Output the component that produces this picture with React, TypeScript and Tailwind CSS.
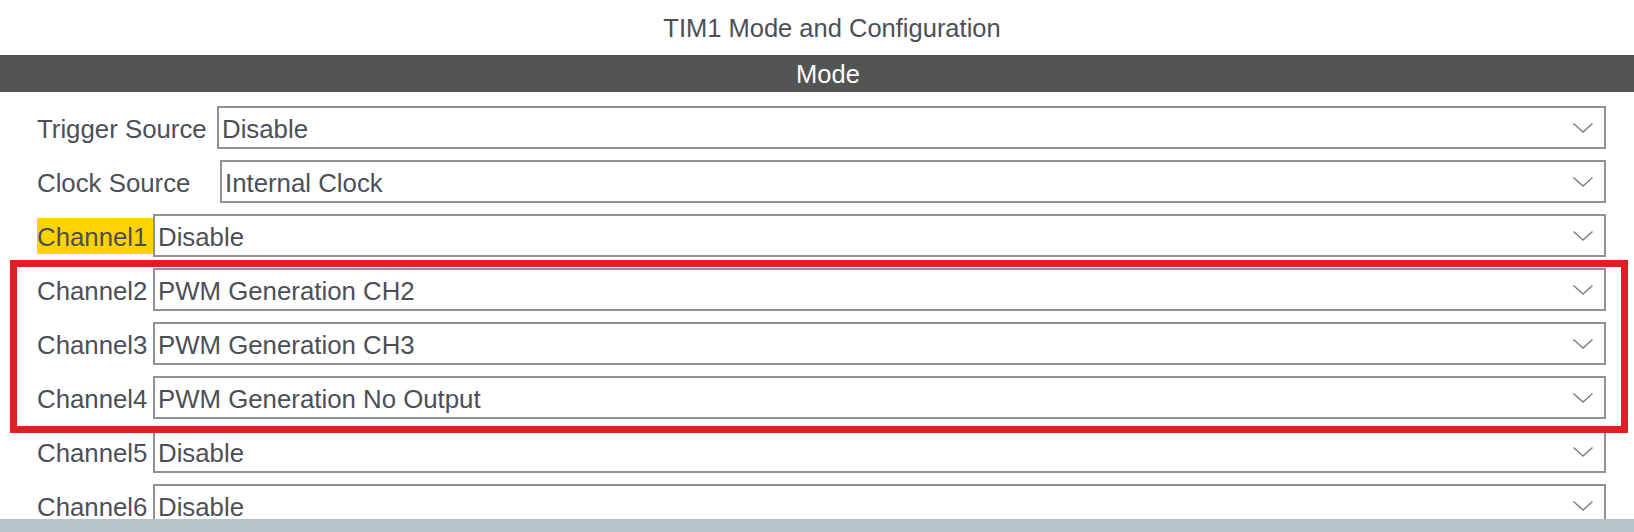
import React from "react"

type Row = { label: string; value: string; labelW: string; highlight?: boolean }

const rows: Row[] = [
    { label: "Trigger Source", value: "Disable", labelW: "w-[180px]" },
    { label: "Clock Source", value: "Internal Clock", labelW: "w-[183px]" },
    { label: "Channel1", value: "Disable", labelW: "w-[116px]", highlight: true },
    { label: "Channel2", value: "PWM Generation CH2", labelW: "w-[116px]" },
    { label: "Channel3", value: "PWM Generation CH3", labelW: "w-[116px]" },
    { label: "Channel4", value: "PWM Generation No Output", labelW: "w-[116px]" },
    { label: "Channel5", value: "Disable", labelW: "w-[116px]" },
    { label: "Channel6", value: "Disable", labelW: "w-[116px]" },
]

function Chevron() {
    return (
        <svg width="22" height="12" viewBox="0 0 22 12" className="shrink-0">
            <path d="M1.5 1.5 L11 10 L20.5 1.5" fill="none" stroke="#7f8388" strokeWidth="1.6" />
        </svg>
    )
}

function SelectRow({ row }: { row: Row }) {
    return (
        <div className="flex h-[43px] items-center pl-[37px] text-[25.8px]">
            <div className={`${row.labelW} flex h-full shrink-0 items-center`}>
                <span
                    className={`flex h-[36px] items-center pt-[3px] ${row.highlight ? "w-full bg-[#ffd200]" : ""}`}
                >
                    {row.label}
                </span>
            </div>
            {/* fake dropdown */}
            <div className="mr-[28px] flex h-full flex-1 items-center border-2 border-[#8e9398] bg-white pl-[3px] pr-[10px]">
                <span className="flex-1 pt-[3px]">{row.value}</span>
                <Chevron />
            </div>
        </div>
    )
}

export default function App() {
    return (
        <div className="relative h-[532px] w-[1634px] overflow-hidden bg-white font-['Liberation_Sans',Arial,sans-serif] text-[25.5px] text-[#4c5056]">
            <div className="flex h-[519px] flex-col overflow-hidden">
                {/* Title */}
                <div className="flex h-[55px] shrink-0 items-center justify-center pl-[30px] pt-[2px]">
                    TIM1 Mode and Configuration
                </div>

                {/* Section bar */}
                <div className="flex h-[37px] shrink-0 items-center justify-center bg-[#535554] pl-[22px] pt-[2px] text-white">
                    Mode
                </div>

                <div className="mt-[14px] flex flex-col gap-[11px]">
                    {rows.map((row) => (
                        <SelectRow key={row.label} row={row} />
                    ))}
                </div>
            </div>

            {/* bottom scrollbar strip */}
            <div className="h-[13px] bg-[#b8c3c8]" />

            {/* red annotation frame */}
            <div className="pointer-events-none absolute left-[10px] top-[260px] h-[173px] w-[1618px] border-[7px] border-[#e41c23]" />
        </div>
    )
}
